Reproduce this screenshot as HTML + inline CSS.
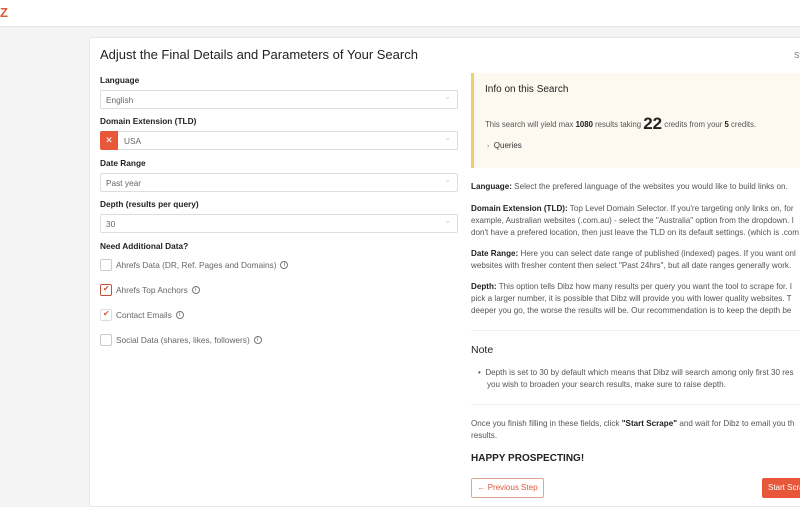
<!DOCTYPE html>
<html><head><meta charset="utf-8"><style>
*{box-sizing:border-box;margin:0;padding:0}
body{width:800px;height:500px;overflow:hidden;background:#f4f4f4;font-family:"Liberation Sans",sans-serif;color:#333;position:relative;font-size:8.3px}
.hdr{position:absolute;left:0;top:0;width:800px;height:27px;background:#fff;border-bottom:1px solid #e4e4e4}
.logo{position:absolute;left:0;top:5px;color:#e0582f;font-weight:bold;font-size:13px}
.card{position:absolute;left:89px;top:37px;width:720px;height:470px;background:#fff;border:1px solid #e8e8e8;border-radius:3px}
.a{position:absolute}
h1{position:absolute;left:100px;top:47px;font-size:13px;font-weight:normal;color:#222}
.lbl{position:absolute;left:100px;font-weight:bold;font-size:8.3px;color:#222}
.sel{position:absolute;left:100px;width:358px;height:19px;border:1px solid #ddd;border-radius:2px;color:#666;padding:4px 0 0 5px;font-size:8.3px}
.sel:after{content:"⌄";position:absolute;right:6px;top:1px;color:#ccc;font-size:8px}
.x{position:absolute;left:-1px;top:-1px;width:18px;height:19px;background:#e8573a;color:#fff;text-align:center;line-height:19px;font-size:9px;border-radius:2px 0 0 2px}
.cb{position:absolute;left:100px;width:12px;height:12px;border:1px solid #ccc;border-radius:2px}
.cb.on{border-color:#c0503a}
.ck{position:absolute;left:2px;top:-1px;color:#d9553a;font-size:8px}
.ct{position:absolute;left:116px;color:#666;font-size:8.3px;display:flex;align-items:center}
.i{display:inline-block;width:8px;height:8px;border:1px solid #777;border-radius:50%;font-size:6px;line-height:6px;text-align:center;margin-left:4px;color:#555}
.info{position:absolute;left:471px;top:73px;width:340px;height:95px;background:#fdf9f1;border-left:3px solid #efcf6a}
.p{position:absolute;left:471px;width:340px;line-height:12px;color:#555;white-space:nowrap;font-size:8.1px}
.p b{color:#222}
hr{position:absolute;left:471px;width:340px;border:0;border-top:1px solid #eee}
</style></head><body>
<div class="hdr"><div class="logo">Z</div></div>
<div class="card"></div>
<h1>Adjust the Final Details and Parameters of Your Search</h1>
<div class="a" style="left:794px;top:51px;font-size:8px;color:#777">St</div>
<div class="lbl" style="top:75px">Language</div>
<div class="sel" style="top:90px">English</div>
<div class="lbl" style="top:116px">Domain Extension (TLD)</div>
<div class="sel" style="top:131px;padding-left:23px"><span class="x">✕</span>USA</div>
<div class="lbl" style="top:158px">Date Range</div>
<div class="sel" style="top:173px">Past year</div>
<div class="lbl" style="top:199px">Depth (results per query)</div>
<div class="sel" style="top:214px">30</div>
<div class="lbl" style="top:241px">Need Additional Data?</div>
<div class="cb" style="top:259px"></div><div class="ct" style="top:260px">Ahrefs Data (DR, Ref. Pages and Domains)<span class="i">i</span></div>
<div class="cb on" style="top:284px"><span class="ck">✔</span></div><div class="ct" style="top:285px">Ahrefs Top Anchors<span class="i">i</span></div>
<div class="cb" style="top:309px;border-color:#ddd"><span class="ck">✔</span></div><div class="ct" style="top:310px">Contact Emails<span class="i">i</span></div>
<div class="cb" style="top:334px"></div><div class="ct" style="top:335px">Social Data (shares, likes, followers)<span class="i">i</span></div>
<div class="info"></div>
<div class="a" style="left:485px;top:84px;font-size:10px;color:#222">Info on this Search</div>
<div class="a" style="left:485px;top:114px;font-size:7.8px;color:#555;white-space:nowrap">This search will yield max <b style="color:#222">1080</b> results taking <b style="font-size:17px;color:#222;vertical-align:-2px">22</b> credits from your <b style="color:#222">5</b> credits.</div>
<div class="a" style="left:487px;top:141px;font-size:8px;color:#333"><span style="color:#888;font-size:7px">›</span>&nbsp; Queries</div>
<div class="p" style="top:181px"><b>Language:</b> Select the prefered language of the websites you would like to build links on.</div>
<div class="p" style="top:203px"><b>Domain Extension (TLD):</b> Top Level Domain Selector. If you're targeting only links on, for<br>example, Australian websites (.com.au) - select the "Australia" option from the dropdown. I<br>don't have a prefered location, then just leave the TLD on its default settings. (which is .com</div>
<div class="p" style="top:248px"><b>Date Range:</b> Here you can select date range of published (indexed) pages. If you want onl<br>websites with fresher content then select "Past 24hrs", but all date ranges generally work.</div>
<div class="p" style="top:281px"><b>Depth:</b> This option tells Dibz how many results per query you want the tool to scrape for. I<br>pick a larger number, it is possible that Dibz will provide you with lower quality websites. T<br>deeper you go, the worse the results will be. Our recommendation is to keep the depth be</div>
<hr style="top:330px">
<div class="a" style="left:471px;top:344px;font-size:10.5px;color:#222">Note</div>
<div class="p" style="top:367px;left:478px">•&nbsp; Depth is set to 30 by default which means that Dibz will search among only first 30 res<br>&nbsp;&nbsp;&nbsp;&nbsp;you wish to broaden your search results, make sure to raise depth.</div>
<hr style="top:404px">
<div class="p" style="top:418px">Once you finish filling in these fields, click <b>"Start Scrape"</b> and wait for Dibz to email you th<br>results.</div>
<div class="a" style="left:471px;top:453px;font-size:10px;font-weight:bold;color:#222">HAPPY PROSPECTING!</div>
<div class="a" style="left:471px;top:478px;width:73px;height:20px;border:1px solid #e0a595;border-radius:2px;color:#e0583a;font-size:8px;line-height:18px;text-align:center">← Previous Step</div>
<div class="a" style="left:762px;top:478px;width:60px;height:20px;background:#e8573a;border-radius:2px;color:#fff;font-size:8px;line-height:20px;padding-left:6px;white-space:nowrap">Start Scrape</div>
</body></html>
